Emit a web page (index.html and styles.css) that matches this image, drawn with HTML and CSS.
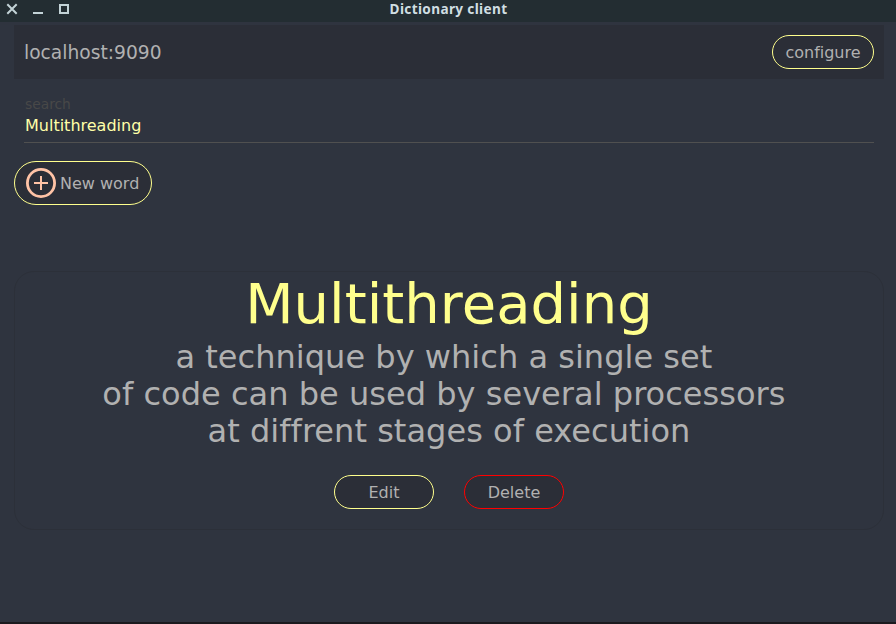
FILE: index.html
```html
<!DOCTYPE html>
<html lang="en">
<head>
<meta charset="utf-8">
<title>Dictionary client</title>
<link rel="stylesheet" href="styles.css">
</head>
<body>
<header class="titlebar">
  <div class="window-controls">
    <svg width="70" height="18" viewBox="0 0 70 18" fill="none" stroke="#c3d3d7" stroke-width="2">
      <path d="M7.3 4.3l9.4 9.4M16.7 4.3L7.3 13.7"/>
      <path d="M33 13h10"/>
      <path d="M60 5h8v8h-8z"/>
    </svg>
  </div>
  <h1 class="window-title">Dictionary client</h1>
</header>
<main class="content">
  <section class="server-bar">
    <span class="server-address">localhost:9090</span>
    <button class="btn btn-configure">configure</button>
  </section>
  <label class="search">
    <span class="search-label">search</span>
    <span class="search-value">Multithreading</span>
  </label>
  <button class="btn btn-new">
    <svg width="30" height="30" viewBox="0 0 30 30" fill="none" stroke="#ffc3a6">
      <circle cx="15" cy="15" r="13.6" stroke-width="2.8"/>
      <path d="M15 8v14M8 15h14" stroke-width="2"/>
    </svg>
    <span>New word</span>
  </button>
  <article class="card">
    <h2 class="word">Multithreading</h2>
    <p class="meaning">a technique by which a single set 
of code can be used by several processors 
at diffrent stages of execution</p>
    <div class="actions">
      <button class="btn">Edit</button>
      <button class="btn btn-delete">Delete</button>
    </div>
  </article>
</main>
</body>
</html>
```
FILE: styles.css
```css
* { box-sizing: border-box; }
body {
  margin: 0;
  height: 624px;
  overflow: hidden;
  background: #2f343f;
  border-bottom: 2px solid #1b1a1e;
  color: #b1b1b1;
  font: 16px/19px "DejaVu Sans", sans-serif;
  font-variant-ligatures: none;
}
.titlebar {
  display: grid;
  grid-template-columns: 70px 1fr 69px;
  height: 22px;
  background: #232d32;
}
.window-controls svg { display: block; }
.window-title {
  margin: 0;
  color: #d0dee2;
  font: bold 13.6px/17px "Noto Sans", sans-serif;
  letter-spacing: 0.35px;
  text-align: center;
}
.content { padding: 3px 12px 0 14px; }
.server-bar {
  display: flex;
  align-items: center;
  justify-content: space-between;
  height: 54px;
  padding: 0 10px;
  background: #2b2e37;
}
.server-address { font-size: 18.67px; line-height: 24px; padding-top: 1px; }
.btn {
  width: 100px;
  height: 34px;
  padding: 0;
  border: 1px solid #ffff8d;
  border-radius: 17px;
  background: #2b2e37;
  color: #b1b1b1;
  font: inherit;
  font-variant-ligatures: none;
}
.btn-configure { width: 102px; }
.search {
  display: flex;
  flex-direction: column;
  height: 48px;
  margin: 16px 10px 18px 10px;
  padding-left: 1px;
  border-bottom: 1px solid #505050;
}
.search-label {
  height: 20px;
  color: #484848;
  font-size: 13.8px;
  line-height: 19px;
}
.search-value { color: #ffffa8; line-height: 22px; }
.btn-new {
  display: flex;
  align-items: center;
  gap: 4px;
  width: 138px;
  height: 44px;
  padding-left: 11px;
  border-radius: 22px;
}
.card {
  height: 259px;
  margin-top: 66px;
  border: 1px solid #2c3039;
  border-radius: 20px;
  text-align: center;
}
.word {
  margin: 0;
  color: #ffff8d;
  font-size: 56px;
  font-weight: normal;
  letter-spacing: 0.05px;
  line-height: 64px;
}
.meaning {
  margin: 3px 0 0;
  font-size: 32px;
  letter-spacing: 0.03px;
  line-height: 37px;
  white-space: break-spaces;
}
.actions {
  display: flex;
  justify-content: center;
  gap: 30px;
  margin-top: 25px;
}
.btn-delete { border-color: #f00; }
```
